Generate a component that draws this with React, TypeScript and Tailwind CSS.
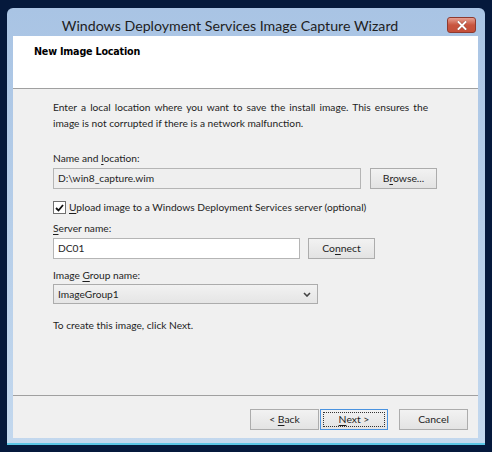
import React from "react";

const U = ({ children }: { children: React.ReactNode }) => <span className="underline underline-offset-2">{children}</span>;

function Btn({ children, w, focused }: { children: React.ReactNode; w: string; focused?: boolean }) {
  return (
    <div
      className={
        "h-[21px] flex items-center justify-center text-[10.4px] text-[#1e1e1e] bg-gradient-to-b from-[#f2f2f2] to-[#e3e3e3] border " +
        (focused ? "border-[#4a93e0]" : "border-[#acacac]") +
        " " +
        w
      }
    >
      {focused ? (
        <div className="w-[calc(100%-4px)] h-[calc(100%-4px)] border border-dotted border-[#333] flex items-center justify-center">
          <span className="whitespace-pre">{children}</span>
        </div>
      ) : (
        <span className="whitespace-pre">{children}</span>
      )}
    </div>
  );
}

export default function App() {
  return (
    <div className="w-[492px] h-[452px] bg-[#05193c] pt-[8px] pl-[7px] pr-[7px] pb-[7px] font-['Lato',sans-serif]">
      <div className="h-full rounded-t-[6px] bg-gradient-to-b from-[#a9c4e4] to-[#c3d8ee] flex flex-col pl-[6px] pr-[7px] pb-[5px] border-b-2 border-[#5bc6e6]">
        {/* title bar */}
        <div className="h-[28px] flex items-start shrink-0 pt-[9px]">
          <div className="flex-1 text-center text-[14.2px] leading-[18px] text-[#1e1e1e]">
            Windows Deployment Services Image Capture Wizard
          </div>
          <div className="w-[29px] h-[16px] mr-[2px] rounded-[3px] border border-[#8e3a2f] bg-gradient-to-b from-[#e5a093] via-[#c8553f] to-[#c44f3a] flex items-center justify-center">
            <svg width="10" height="9" viewBox="0 0 10 9">
              <path d="M1.5 1 L8.5 8 M8.5 1 L1.5 8" stroke="#5a1a12" strokeWidth="3" strokeLinecap="round" opacity="0.5" />
              <path d="M1.5 1 L8.5 8 M8.5 1 L1.5 8" stroke="#ffffff" strokeWidth="2" strokeLinecap="square" />
            </svg>
          </div>
        </div>
        {/* client */}
        <div className="flex-1 flex flex-col bg-[#f0f0f0] text-[10.2px] text-[#1e1e1e]">
          <div className="h-[53px] bg-white border-b border-[#a0a0a0] pl-[21px] pt-[9px] shrink-0">
            <div className="font-bold text-[9.6px] font-['DejaVu_Sans',sans-serif] tracking-[-0.2px] text-black">New Image Location</div>
          </div>
          <div className="flex-1 pl-[40px] pt-[10px] flex flex-col">
            <div className="leading-[16px]">
              <span className="[word-spacing:1.5px]">Enter a local location where you want to save the install image.  This ensures the</span>
              <br />
              image is not corrupted if there is a network malfunction.
            </div>
            <div className="mt-[19px] leading-[16px]">
              Name and <U>l</U>ocation:
            </div>
            <div className="mt-[2px] flex items-center gap-[9px]">
              <div className="w-[308px] h-[21px] border border-[#b5b5b5] bg-[#efefef] flex items-center pl-[4px]">
                D:\win8_capture.wim
              </div>
              <Btn w="w-[67px]">
                B<U>r</U>owse...
              </Btn>
            </div>
            <div className="mt-[11px] flex items-center">
              <div className="w-[13px] h-[13px] border border-[#707070] bg-white flex items-center justify-center">
                <svg width="9" height="8" viewBox="0 0 9 8">
                  <path d="M1 4 L3.5 6.5 L8 1" stroke="#111" strokeWidth="1.8" fill="none" />
                </svg>
              </div>
              <div className="ml-[3px]">
                <U>U</U>pload image to a Windows Deployment Services server (optional)
              </div>
            </div>
            <div className="mt-[5px] leading-[16px]">
              <U>S</U>erver name:
            </div>
            <div className="mt-[2px] flex items-center gap-[8px]">
              <div className="w-[247px] h-[21px] border border-[#b5b5b5] bg-white flex items-center pl-[4px]">DC01</div>
              <Btn w="w-[67px]">
                Co<U>n</U>nect
              </Btn>
            </div>
            <div className="mt-[8px] leading-[16px]">
              Image <U>G</U>roup name:
            </div>
            <div className="mt-[1px] w-[265px] h-[20px] border border-[#acacac] bg-gradient-to-b from-[#f2f2f2] to-[#e5e5e5] flex items-center justify-between pl-[4px] pr-[6px]">
              <span>ImageGroup1</span>
              <svg width="8" height="5" viewBox="0 0 8 5">
                <path d="M1 1 L4 4 L7 1" stroke="#444" strokeWidth="1.6" fill="none" />
              </svg>
            </div>
            <div className="mt-[13px] leading-[16px]">To create this image, click Next.</div>
          </div>
          <div className="h-[43px] border-t border-[#a0a0a0] shrink-0 flex items-start justify-end pt-[13px] pr-[10px]">
            <Btn w="w-[69px]">
              {"< "}
              <U>B</U>ack
            </Btn>
            <div className="ml-[1px]">
              <Btn w="w-[68px]" focused>
                <U>N</U>
                {"ext >"}
              </Btn>
            </div>
            <div className="ml-[11px]">
              <Btn w="w-[69px]">Cancel</Btn>
            </div>
          </div>
        </div>
      </div>
    </div>
  );
}
